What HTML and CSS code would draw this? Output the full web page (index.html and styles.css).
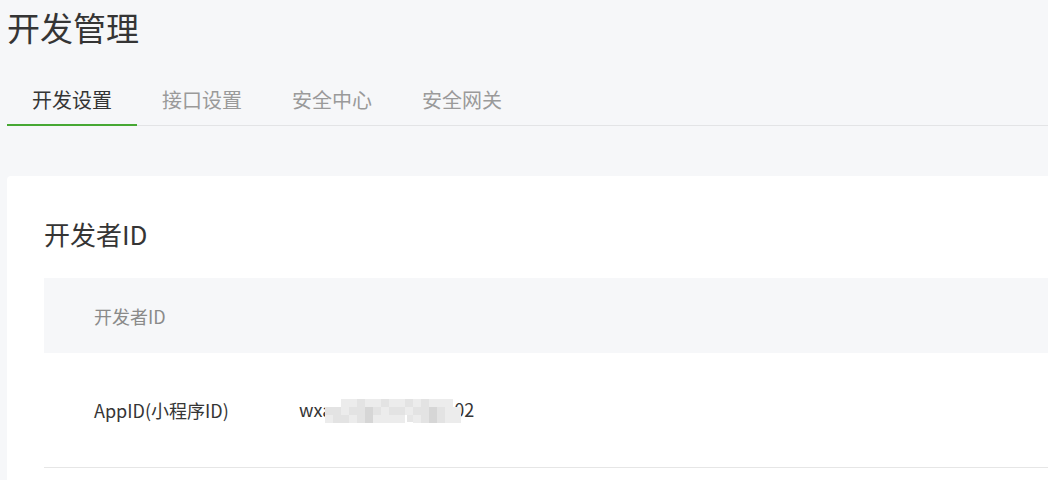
FILE: index.html
```html
<!DOCTYPE html>
<html lang="zh-CN">
<head>
<meta charset="utf-8">
<title>开发管理</title>
<link rel="stylesheet" href="styles.css">
</head>
<body>
<div class="page">
  <h1 class="title">开发管理</h1>
  <div class="tabs">
    <div class="tab active">开发设置</div>
    <div class="tab">接口设置</div>
    <div class="tab">安全中心</div>
    <div class="tab">安全网关</div>
  </div>
  <div class="card">
    <h2 class="card-title">开发者ID</h2>
    <table class="info-table">
      <thead>
        <tr><th colspan="2">开发者ID</th></tr>
      </thead>
      <tbody>
        <tr>
          <td class="label">AppID(小程序ID)</td>
          <td class="value">wxa<span class="mosaic">
            <i class="m0"></i><i class="m0"></i><i class="m1"></i><i class="m1"></i><i class="m2"></i><i class="m1"></i><i class="m1"></i><i class="m2"></i><i class="m1"></i><i class="m1"></i><i class="m2"></i><i class="m1"></i><i class="m2"></i><i class="m1"></i><i class="m1"></i><i class="m1"></i><i class="m0"></i>
            <i class="m2"></i><i class="m2"></i><i class="m1"></i><i class="m2"></i><i class="m2"></i><i class="m3"></i><i class="m2"></i><i class="m1"></i><i class="m2"></i><i class="m2"></i><i class="m1"></i><i class="m2"></i><i class="m2"></i><i class="m3"></i><i class="m2"></i><i class="m1"></i><i class="m1"></i>
            <i class="m1"></i><i class="m2"></i><i class="m2"></i><i class="m1"></i><i class="m2"></i><i class="m3"></i><i class="m1"></i><i class="m1"></i><i class="m1"></i><i class="m1"></i><i class="m4"></i><i class="m1"></i><i class="m2"></i><i class="m3"></i><i class="m2"></i><i class="m1"></i><i class="m1"></i>
          </span>02</td>
        </tr>
      </tbody>
    </table>
  </div>
</div>
</body>
</html>
```
FILE: styles.css
```css
html, body {
  margin: 0;
  padding: 0;
  overflow: hidden;
}
body {
  background: #f6f7f9;
  font-family: "Noto Sans CJK SC", "Noto Sans", sans-serif;
  color: #353535;
}
.page {
  width: 1200px;
  padding-left: 7px;
}
.title {
  margin: 0;
  font-size: 33px;
  font-weight: normal;
  line-height: 54px;
  color: #353535;
}
.tabs {
  display: flex;
  margin-top: 21px;
  border-bottom: 1px solid #e3e4e6;
}
.tab {
  padding: 0 25px;
  font-size: 20px;
  line-height: 49px;
  color: #9a9a9a;
  border-bottom: 2px solid transparent;
  margin-bottom: -1px;
}
.tab.active {
  color: #353535;
  border-bottom-color: #47a834;
}
.card {
  margin-top: 50px;
  background: #fff;
  border-radius: 4px;
  padding: 40px 0 40px 37px;
}
.card-title {
  margin: 0 0 26px;
  font-size: 26px;
  font-weight: normal;
  line-height: 36px;
  color: #353535;
}
.info-table {
  width: 100%;
  border-collapse: collapse;
}
.info-table th {
  background: #f6f7f9;
  height: 75px;
  padding: 0 0 0 50px;
  text-align: left;
  font-weight: normal;
  font-size: 18px;
  color: #8a8a8a;
}
.info-table td {
  height: 114px;
  font-size: 18px;
  color: #353535;
  border-bottom: 1px solid #e6e6e6;
  padding: 0;
}
.info-table .label {
  width: 205px;
  padding-left: 50px;
}
.info-table .value {
  white-space: nowrap;
}
.mosaic {
  display: inline-grid;
  grid-template-columns: repeat(17, 8px);
  grid-auto-rows: 8px;
  vertical-align: middle;
  margin-left: -7px;
  margin-right: -7px;
  position: relative;
  top: -1px;
}
.mosaic i {
  display: block;
}
.m0 { background: transparent; }
.m1 { background: #ececec; }
.m2 { background: #e3e3e3; }
.m3 { background: #d6d6d6; }
.m4 { background: #e6e6e6; box-shadow: inset 3px -2px 0 -1px #fff; }
```
